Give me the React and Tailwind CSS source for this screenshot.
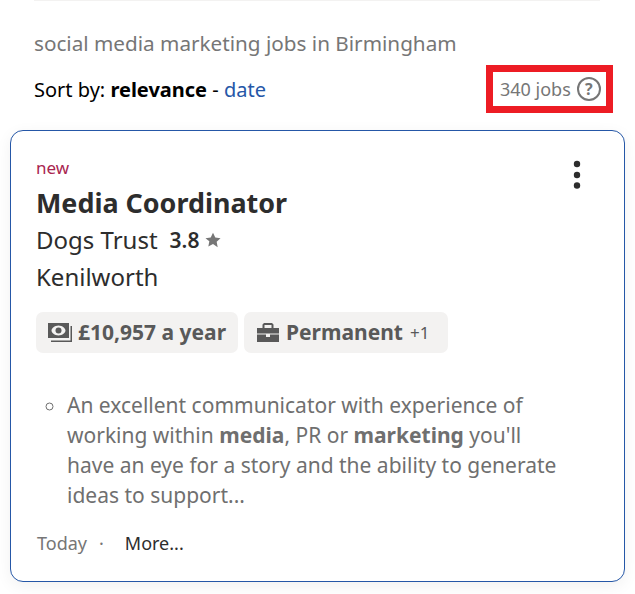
function CashIcon() {
  return (
    <svg width="24" height="19" viewBox="0 0 24 19" className="shrink-0">
      <path fill="#595959" fillRule="evenodd" d="M0 0h21v15H0V0zm10.500 2.500c-4 0-7 3-7 5s3 5 7 5 7-3 7-5-3-5-7-5z" />
      <circle cx="10.500" cy="7.500" r="3" fill="#595959" />
      <path fill="#595959" d="M22.500 3H24v16H3v-1.500h19.500V3z" />
    </svg>
  );
}

function CaseIcon() {
  return (
    <svg width="22" height="20" viewBox="0 0 22 20" className="shrink-0">
      <path fill="#595959" d="M7 0h8l1.500 1.500V5H22v5.500H0V5h5.500V1.500L7 0zm.5 2v3h7V2h-7z" />
      <path fill="#595959" d="M0 11.500h9V14h4v-2.500h9V19H0v-7.500z" />
    </svg>
  );
}

export default function App() {
  return (
    <div className="w-[635px] h-[594px] bg-white overflow-hidden font-['Noto_Sans',sans-serif]">
      <div className="mx-[34px] w-[566px] h-px bg-[#f3f2f1]" />

      <div className="px-[34px] pt-[28px] text-[20.700px] leading-[28px] text-[#767676]">
        social media marketing jobs in Birmingham
      </div>

      <div className="flex items-center justify-between pl-[34px] pr-[22px] mt-[8px]">
        <div className="pt-[2px] text-[20px] leading-[28px] text-black">
          Sort by: <b>relevance</b> - <span className="text-[#2557a7]">date</span>
        </div>
        <div className="flex items-center gap-[6px] border-[7px] border-[#ed1c24] h-[48px] w-[127px] pl-[7px] text-[18px] text-[#767676]">
          340 jobs
          <span className="w-[24px] h-[24px] rounded-full border-[2.5px] border-[#767676] flex items-center justify-center text-[16px] font-bold leading-none">
            ?
          </span>
        </div>
      </div>

      <div className="relative mx-[10px] mt-[17px] h-[452px] rounded-[13px] border border-[#2557a7] bg-white px-[25px] pt-[25px] shadow-[0_4px_16px_rgba(0,0,0,0.06)]">
        <svg width="8" height="30" viewBox="0 0 8 30" className="absolute top-[29px] right-[43px]">
          <circle cx="4" cy="4" r="3.200" fill="#2d2d2d" />
          <circle cx="4" cy="15" r="3.200" fill="#2d2d2d" />
          <circle cx="4" cy="25.500" r="3.200" fill="#2d2d2d" />
        </svg>
        <div className="text-[17px] leading-[24px] text-[#a9254f]">new</div>
        <div className="mt-[5px] text-[26.900px] leading-[36px] font-bold text-[#2d2d2d]">Media Coordinator</div>
        <div className="mt-[1px] flex items-center text-[24px] leading-[36px] text-[#2d2d2d]">
          Dogs Trust
          <span className="ml-[12px] text-[21px] font-semibold">3.8</span>
          <svg width="16" height="16" viewBox="0 0 24 24" className="ml-[6px]">
            <path fill="#767676" d="M12 1l3.400 7.300 7.900 1-5.800 5.500 1.500 7.900L12 18l-7 3.700 1.500-7.900L.7 9.300l7.900-1z" />
          </svg>
        </div>
        <div className="mt-[1px] text-[24px] leading-[36px] text-[#2d2d2d]">Kenilworth</div>

        <div className="mt-[17px] flex gap-[6px]">
          <div className="flex items-center gap-[6px] h-[41px] w-[202px] pl-[12px] rounded-[7px] bg-[#f3f2f1] text-[21px] font-bold text-[#595959]">
            <CashIcon />
            £10,957 a year
          </div>
          <div className="flex items-center gap-[7px] h-[41px] w-[204px] pl-[13px] rounded-[7px] bg-[#f3f2f1] text-[21px] font-bold text-[#595959]">
            <CaseIcon />
            Permanent
            <span className="text-[17px] font-normal">+1</span>
          </div>
        </div>

        <ul className="mt-[37px] ml-[31px] pr-[30px] list-[circle] text-[21px] leading-[30px] text-[#6f6f6f]">
          <li>
            An excellent communicator with experience of working within <b>media</b>, PR or <b>marketing</b> you'll
            have an eye for a story and the ability to generate ideas to support...
          </li>
        </ul>

        <div className="mt-[21px] pl-px flex items-center text-[18px] leading-[24px]">
          <span className="text-[#767676]">Today</span>
          <span className="ml-[12px] text-[#767676]">·</span>
          <span className="ml-[21px] text-[#2d2d2d]">More...</span>
        </div>
      </div>
    </div>
  );
}
